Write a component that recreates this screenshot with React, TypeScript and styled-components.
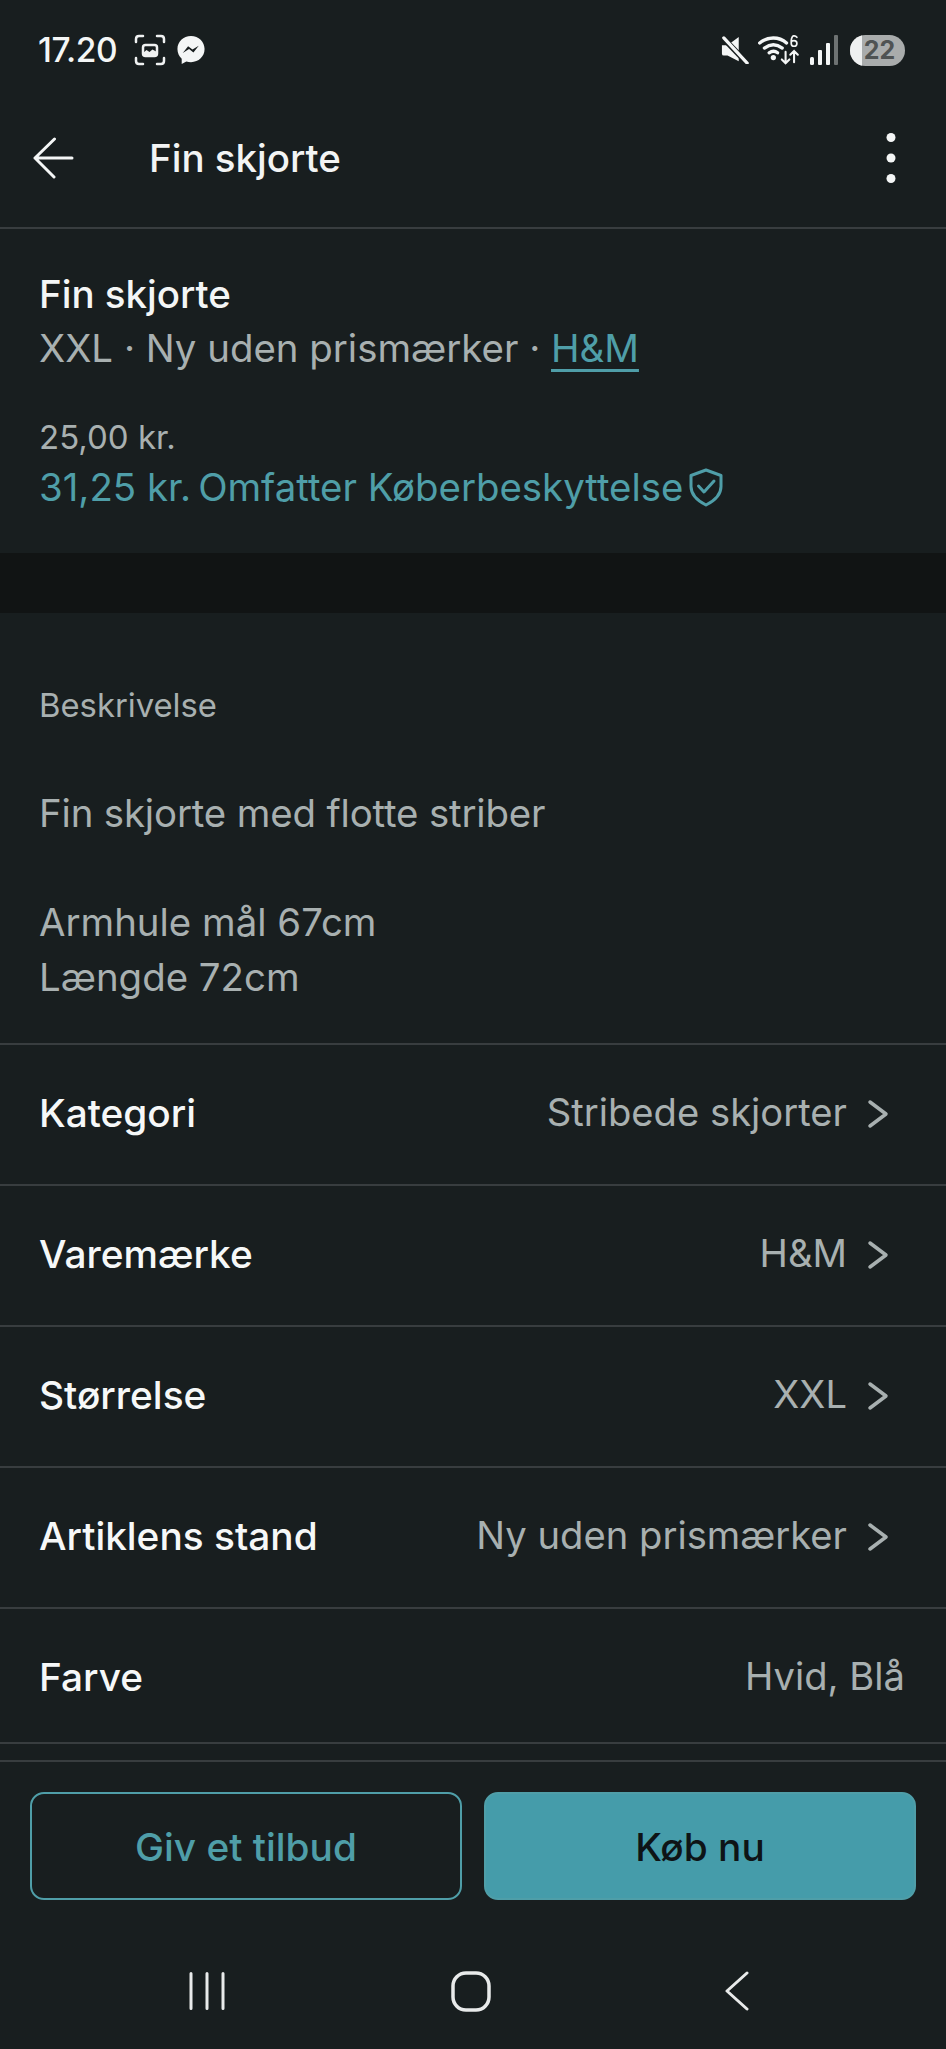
import React from "react";
import styled, { createGlobalStyle } from "styled-components";

const GlobalStyle = createGlobalStyle`
  html, body {
    margin: 0;
    padding: 0;
    background: #181e1f;
  }
  * { box-sizing: border-box; }
`;

const Screen = styled.div`
  width: 946px;
  height: 2049px;
  display: flex;
  flex-direction: column;
  overflow: hidden;
  background: #181e1f;
  font-family: Inter, "Liberation Sans", sans-serif;
  color: #fff;
`;

const StatusBar = styled.div`
  height: 100px;
  padding: 0 41px 0 38px;
  display: flex;
  align-items: center;
  justify-content: space-between;
`;

const StatusGroup = styled.div`
  display: flex;
  align-items: center;
`;

const Clock = styled.span`
  font-size: 33.5px;
  font-weight: 500;
  letter-spacing: -0.4px;
  margin-right: 17px;
  color: #f4f6f6;
`;

const Battery = styled.div`
  position: relative;
  width: 55px;
  height: 31px;
  border-radius: 16px;
  background: #a9acac;
  overflow: hidden;
  color: #4f5353;
  font-size: 25px;
  font-weight: 700;
  display: flex;
  align-items: center;
  justify-content: center;
  padding-left: 4px;

  &::before {
    content: "";
    position: absolute;
    left: 0;
    top: 0;
    bottom: 0;
    width: 12px;
    background: #eef0f0;
  }
`;

const TopBar = styled.header`
  height: 129px;
  padding: 0 49px 11px 33px;
  border-bottom: 2px solid #383d3f;
  display: flex;
  align-items: center;
`;

const TopTitle = styled.h1`
  margin: 0 0 0 74px;
  flex: 1;
  font-size: 38.5px;
  font-weight: 500;
  color: #f2f4f4;
`;

const Summary = styled.section`
  height: 324px;
  padding: 41px 39px 0;
`;

const ItemName = styled.div`
  font-size: 38.5px;
  line-height: 48px;
  font-weight: 500;
  color: #f4f6f6;
`;

const Meta = styled.div`
  font-size: 38.4px;
  line-height: 48px;
  margin-top: 6px;
  color: #a8b0b0;
`;

const BrandLink = styled.a`
  color: #4f9ea8;
  text-decoration: underline;
  text-decoration-thickness: 3px;
  text-underline-offset: 7px;
`;

const Price = styled.div`
  font-size: 33px;
  line-height: 40px;
  margin-top: 45px;
  color: #a8b0b0;
`;

const TotalPrice = styled.div`
  display: flex;
  align-items: center;
  gap: 7px;
  font-size: 38.4px;
  line-height: 48px;
  margin-top: 6px;
  color: #4f9ea8;
`;

const Band = styled.div`
  height: 60px;
  background: #111414;
`;

const Description = styled.section`
  height: 432px;
  padding: 72px 39px 0;
  border-bottom: 2px solid #383d3f;
  color: #a8b0b0;
`;

const DescriptionLabel = styled.div`
  font-size: 32.8px;
  line-height: 40px;
  margin-bottom: 61px;
`;

const DescriptionText = styled.p<{ $gap?: number; $tracking?: number }>`
  margin: 0 0 ${(p) => p.$gap ?? 0}px;
  font-size: 38.4px;
  line-height: 55px;
  letter-spacing: ${(p) => p.$tracking ?? 0}px;
`;

const Row = styled.div<{ $hasChevron?: boolean; $clipped?: boolean }>`
  height: ${(p) => (p.$clipped ? 135 : 141)}px;
  padding: ${(p) => (p.$clipped ? 6 : 0)}px ${(p) => (p.$hasChevron ? 57 : 41)}px 5px 39px;
  display: flex;
  align-items: center;
  justify-content: space-between;
  border-bottom: 2px solid #383d3f;
`;

const RowLabel = styled.span`
  font-size: 38.8px;
  font-weight: 500;
  color: #f6f8f8;
`;

const RowValue = styled.span`
  display: flex;
  align-items: center;
  gap: 20px;
  font-size: 38.2px;
  color: #a8b0b0;

  svg {
    margin-top: 3px;
  }
`;

const Spacer = styled.div`
  height: 18px;
  flex: none;
  border-bottom: 2px solid #383d3f;
`;

const Actions = styled.div`
  padding: 30px 30px 0;
  display: grid;
  grid-template-columns: 1fr 1fr;
  gap: 22px;
`;

const ActionButton = styled.button<{ $filled?: boolean }>`
  height: 108px;
  border-radius: 14px;
  border: 2px solid #4f9ea8;
  background: ${(p) => (p.$filled ? "#459caa" : "transparent")};
  color: ${(p) => (p.$filled ? "#0e1416" : "#4f9ea8")};
  font-family: inherit;
  font-size: 38.8px;
  font-weight: 500;
`;

const NavBar = styled.nav`
  flex: 1;
  padding: 33px 197px 0 189px;
  display: flex;
  align-items: center;
  justify-content: space-between;

  svg:nth-child(2) {
    margin-right: 7px;
  }
`;

const BackIcon = () => (
  <svg width="42" height="42" viewBox="0 0 42 42" fill="none" stroke="#f4f6f6" strokeWidth="3" strokeLinecap="round" strokeLinejoin="round">
    <path d="M2 21h37M21.500 2 2 21l19 19" />
  </svg>
);

const MoreIcon = () => (
  <svg width="12" height="52" viewBox="0 0 12 52" fill="#f4f6f6">
    <circle cx="6" cy="5.500" r="4.500" />
    <circle cx="6" cy="26" r="4.500" />
    <circle cx="6" cy="46.500" r="4.500" />
  </svg>
);

const ScreenshotIcon = () => (
  <svg width="32" height="32" viewBox="0 0 32 32" fill="none" stroke="#f0f2f2" strokeWidth="2.500" strokeLinecap="round" style={{ marginRight: 10 }}>
    <path d="M2 8V5q0-3 3-3h4M23 2h4q3 0 3 3v3M30 24v3q0 3-3 3h-4M9 30H5q-3 0-3-3v-3" />
    <rect x="9" y="11" width="14" height="11" rx="2.500" />
    <path d="M9 19l3.500-3 3 2 3-2.500L23 18v4H9z" fill="#f0f2f2" stroke="none" />
  </svg>
);

const MessengerIcon = () => (
  <svg width="30" height="31" viewBox="0 0 30 32">
    <path d="M15 1C7 1 1 6.800 1 14.500c0 4.100 1.700 7.600 4.400 10V30l4.800-2.700c1.500.4 3.100.7 4.800.7 8 0 14-5.900 14-13.500S23 1 15 1z" fill="#f4f6f6" />
    <path d="M6.500 18.500 12 11.500l4.500 3.500 6.500-4-5.500 7-4.500-3.500z" fill="#181e1f" />
  </svg>
);

const MuteIcon = () => (
  <svg width="28" height="28" viewBox="0 0 30 30" style={{ marginRight: 9 }}>
    <path d="M1 10h6l12-9v26L7 21H3q-2 0-2-2z" fill="#f4f6f6" />
    <path d="M3 3 28 29" stroke="#181e1f" strokeWidth="6" />
    <path d="M3 2 28 29" stroke="#f4f6f6" strokeWidth="3.500" strokeLinecap="round" />
  </svg>
);

const WifiIcon = () => (
  <svg width="42" height="32" viewBox="0 0 44 34" fill="none" stroke="#f4f6f6" strokeLinecap="round" style={{ marginRight: 10 }}>
    <path d="M1.500 9.500C10 2.500 22 2.500 30 9.500" strokeWidth="3.500" />
    <path d="M6.500 15c6-4.500 13-4.500 19 0" strokeWidth="3.500" />
    <path d="M11.500 20c3.500-2.500 6-2.500 9 0" strokeWidth="3.500" />
    <circle cx="16" cy="25" r="2.800" fill="#f4f6f6" stroke="none" />
    <path d="M29 19v12M25 27l4 4 4-4M38 30V18M34 22l4-4 4 4" strokeWidth="2.200" />
    <path d="M41 3.500q-1.500-2-3.500-1.500T35 7v3q0 3 3 3t3-3-3-3-3 2" strokeWidth="1.800" />
  </svg>
);

const SignalIcon = () => (
  <svg width="28" height="30" viewBox="0 0 28 30" style={{ marginRight: 12 }}>
    <rect x="0" y="22" width="4" height="8" rx="1.500" fill="#f4f6f6" />
    <rect x="8" y="15" width="4" height="15" rx="1" fill="#f4f6f6" />
    <rect x="16" y="8" width="4" height="22" rx="1" fill="#f4f6f6" />
    <rect x="24" y="0" width="4" height="30" rx="1" fill="#6d7272" />
  </svg>
);

const ShieldIcon = () => (
  <svg width="36" height="39" viewBox="0 0 36 39" fill="none" stroke="#4f9ea8" strokeWidth="3" strokeLinecap="round" strokeLinejoin="round" style={{ marginLeft: -2 }}>
    <path d="M18 2 3 7.500v11c0 8 6 14 15 18.500 9-4.500 15-10.500 15-18.500v-11z" />
    <path d="M10.500 18 16 24l10-11" />
  </svg>
);

const ChevronIcon = () => (
  <svg width="22" height="30" viewBox="0 0 22 30" fill="none" stroke="#a8b0b0" strokeWidth="3.500" strokeLinecap="round" strokeLinejoin="round">
    <path d="M3 3l16 12L3 27" />
  </svg>
);

const RecentsIcon = () => (
  <svg width="36" height="38" viewBox="0 0 36 38" fill="none" stroke="#e8eaea" strokeWidth="3" strokeLinecap="round">
    <path d="M2 1.500v35M18 1.500v35M34 1.500v35" />
  </svg>
);

const HomeIcon = () => (
  <svg width="40" height="41" viewBox="0 0 40 41" fill="none" stroke="#e8eaea" strokeWidth="3.500">
    <rect x="2" y="2" width="36" height="37" rx="13" />
  </svg>
);

const NavBackIcon = () => (
  <svg width="25" height="40" viewBox="0 0 25 40" fill="none" stroke="#e8eaea" strokeWidth="3" strokeLinecap="round" strokeLinejoin="round">
    <path d="M23 2 3 20l20 18" />
  </svg>
);

const attributes = [
  { label: "Kategori", value: "Stribede skjorter" },
  { label: "Varemærke", value: "H&M" },
  { label: "Størrelse", value: "XXL" },
  { label: "Artiklens stand", value: "Ny uden prismærker" },
];

export default function App() {
  return (
    <>
      <GlobalStyle />
      <Screen>
        <StatusBar>
          <StatusGroup>
            <Clock>17.20</Clock>
            <ScreenshotIcon />
            <MessengerIcon />
          </StatusGroup>
          <StatusGroup>
            <MuteIcon />
            <WifiIcon />
            <SignalIcon />
            <Battery>22</Battery>
          </StatusGroup>
        </StatusBar>
        <TopBar>
          <BackIcon />
          <TopTitle>Fin skjorte</TopTitle>
          <MoreIcon />
        </TopBar>
        <Summary>
          <ItemName>Fin skjorte</ItemName>
          <Meta>
            XXL · Ny uden prismærker · <BrandLink>H&amp;M</BrandLink>
          </Meta>
          <Price>25,00 kr.</Price>
          <TotalPrice>
            <span>31,25 kr.</span>
            <span>Omfatter Køberbeskyttelse</span>
            <ShieldIcon />
          </TotalPrice>
        </Summary>
        <Band />
        <Description>
          <DescriptionLabel>Beskrivelse</DescriptionLabel>
          <DescriptionText $gap={54} $tracking={-0.15}>
            Fin skjorte med flotte striber
          </DescriptionText>
          <DescriptionText>Armhule mål 67cm</DescriptionText>
          <DescriptionText>Længde 72cm</DescriptionText>
        </Description>
        {attributes.map((item) => (
          <Row key={item.label} $hasChevron>
            <RowLabel>{item.label}</RowLabel>
            <RowValue>
              {item.value}
              <ChevronIcon />
            </RowValue>
          </Row>
        ))}
        <Row $clipped>
          <RowLabel>Farve</RowLabel>
          <RowValue>Hvid, Blå</RowValue>
        </Row>
        <Spacer />
        <Actions>
          <ActionButton>Giv et tilbud</ActionButton>
          <ActionButton $filled>Køb nu</ActionButton>
        </Actions>
        <NavBar>
          <RecentsIcon />
          <HomeIcon />
          <NavBackIcon />
        </NavBar>
      </Screen>
    </>
  );
}
